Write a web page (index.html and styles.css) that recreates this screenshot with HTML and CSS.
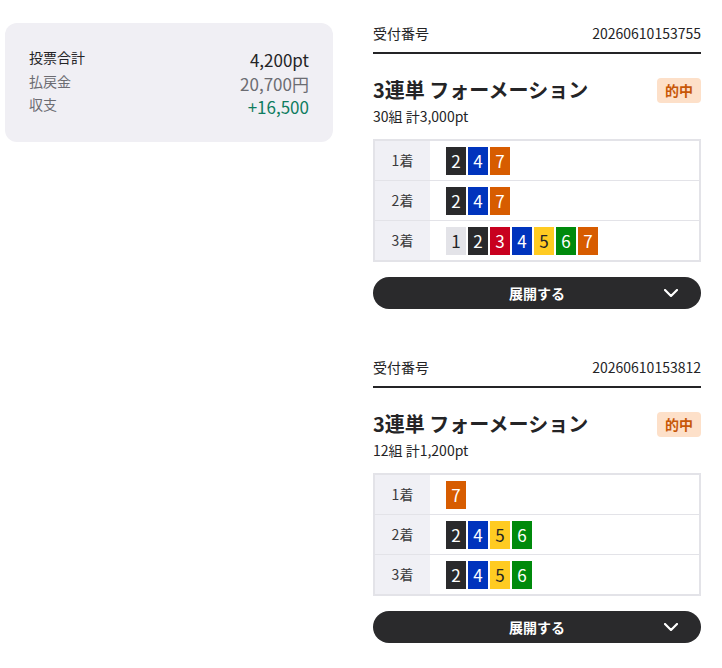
FILE: index.html
```html
<!DOCTYPE html>
<html lang="ja">
<head>
<meta charset="utf-8">
<title>投票履歴</title>
<link rel="stylesheet" href="styles.css">
</head>
<body>
<div class="page">
  <aside class="summary">
    <div class="summary-row">
      <span class="summary-label strong">投票合計</span>
      <span class="summary-value strong">4,200pt</span>
    </div>
    <div class="summary-row">
      <span class="summary-label">払戻金</span>
      <span class="summary-value">20,700円</span>
    </div>
    <div class="summary-row">
      <span class="summary-label">収支</span>
      <span class="summary-value plus">+16,500</span>
    </div>
  </aside>

  <main class="tickets">
    <section class="ticket">
      <div class="ticket-head">
        <span>受付番号</span>
        <span>20260610153755</span>
      </div>
      <div class="ticket-title">
        <h2>3連単 フォーメーション</h2>
        <span class="badge">的中</span>
      </div>
      <p class="ticket-sub">30組 計3,000pt</p>
      <div class="picks">
        <div class="pick-row">
          <div class="pick-label">1着</div>
          <div class="pick-nums">
            <span class="num n2">2</span><span class="num n4">4</span><span class="num n7">7</span>
          </div>
        </div>
        <div class="pick-row">
          <div class="pick-label">2着</div>
          <div class="pick-nums">
            <span class="num n2">2</span><span class="num n4">4</span><span class="num n7">7</span>
          </div>
        </div>
        <div class="pick-row">
          <div class="pick-label">3着</div>
          <div class="pick-nums">
            <span class="num n1">1</span><span class="num n2">2</span><span class="num n3">3</span><span class="num n4">4</span><span class="num n5">5</span><span class="num n6">6</span><span class="num n7">7</span>
          </div>
        </div>
      </div>
      <button class="expand" type="button">
        <span>展開する</span>
        <svg class="chev" width="14" height="8" viewBox="0 0 14 8"><polyline points="1,1 7,7 13,1" fill="none" stroke="#fff" stroke-width="2.2" stroke-linecap="round" stroke-linejoin="round"/></svg>
      </button>
    </section>

    <section class="ticket">
      <div class="ticket-head">
        <span>受付番号</span>
        <span>20260610153812</span>
      </div>
      <div class="ticket-title">
        <h2>3連単 フォーメーション</h2>
        <span class="badge">的中</span>
      </div>
      <p class="ticket-sub">12組 計1,200pt</p>
      <div class="picks">
        <div class="pick-row">
          <div class="pick-label">1着</div>
          <div class="pick-nums">
            <span class="num n7">7</span>
          </div>
        </div>
        <div class="pick-row">
          <div class="pick-label">2着</div>
          <div class="pick-nums">
            <span class="num n2">2</span><span class="num n4">4</span><span class="num n5">5</span><span class="num n6">6</span>
          </div>
        </div>
        <div class="pick-row">
          <div class="pick-label">3着</div>
          <div class="pick-nums">
            <span class="num n2">2</span><span class="num n4">4</span><span class="num n5">5</span><span class="num n6">6</span>
          </div>
        </div>
      </div>
      <button class="expand" type="button">
        <span>展開する</span>
        <svg class="chev" width="14" height="8" viewBox="0 0 14 8"><polyline points="1,1 7,7 13,1" fill="none" stroke="#fff" stroke-width="2.2" stroke-linecap="round" stroke-linejoin="round"/></svg>
      </button>
    </section>
  </main>
</div>
</body>
</html>
```

FILE: styles.css
```css
* { box-sizing: border-box; }

html, body {
  margin: 0;
  padding: 0;
  background: #fff;
}

body {
  font-family: "Noto Sans CJK JP", "Noto Sans", sans-serif;
  color: #242426;
  font-size: 14px;
  line-height: 1.5;
}

.page {
  display: grid;
  grid-template-columns: 328px 328px;
  column-gap: 40px;
  align-items: start;
  padding: 23px 21px 0 5px;
}

/* summary card */
.summary {
  background: #f0eff4;
  border-radius: 12px;
  padding: 25px 24px 23px;
}

.summary-row {
  display: flex;
  justify-content: space-between;
  align-items: center;
}

.summary-label {
  font-size: 14px;
  line-height: 21px;
  color: #6c6c72;
  margin-top: -4px;
}

.summary-value {
  font-size: 17px;
  line-height: 23.5px;
  color: #6c6c72;
}

.summary-label.strong,
.summary-value.strong { color: #242426; }

.summary-value.plus { color: #0e7c60; }

/* tickets */
.tickets {
  display: flex;
  flex-direction: column;
  gap: 48px;
}

.ticket-head {
  display: flex;
  justify-content: space-between;
  font-size: 14px;
  line-height: 21px;
  padding-bottom: 8px;
  border-bottom: 2px solid #242426;
}

.ticket-title {
  display: flex;
  justify-content: space-between;
  align-items: center;
  margin-top: 22px;
}

.ticket-title h2 {
  margin: 0;
  font-size: 20px;
  line-height: 28px;
  font-weight: 700;
}

.badge {
  background: #fde0c9;
  color: #c75708;
  font-weight: 700;
  font-size: 14px;
  line-height: 25px;
  padding: 0 8px;
  border-radius: 4px;
}

.ticket-sub {
  margin: 2px 0 0;
  font-size: 14px;
  line-height: 21px;
}

/* pick table */
.picks {
  margin-top: 12px;
  border: 2px solid #e3e3e8;
}

.pick-row {
  display: flex;
  height: 40px;
}

.pick-row + .pick-row { border-top: 1px solid #e3e3e8; }

.pick-row:first-child { height: 39px; }

.pick-label {
  width: 55px;
  background: #f0f0f5;
  display: flex;
  align-items: center;
  justify-content: center;
  font-size: 14px;
  color: #3a3a3c;
}

.pick-nums {
  display: flex;
  align-items: center;
  gap: 2px;
  padding-left: 16px;
}

.num {
  width: 20px;
  height: 28px;
  display: flex;
  align-items: center;
  justify-content: center;
  font-size: 17px;
  line-height: 1;
  color: #fff;
}

.n1 { background: #e3e3e8; color: #242426; }
.n2 { background: #2a2a2c; }
.n3 { background: #c8001f; }
.n4 { background: #0034bd; }
.n5 { background: #ffcb22; color: #242426; }
.n6 { background: #008a0c; }
.n7 { background: #d75c00; }

/* expand button */
.expand {
  position: relative;
  margin-top: 15px;
  width: 100%;
  height: 32px;
  border: 0;
  border-radius: 16px;
  background: #2a2a2c;
  color: #fff;
  font-family: inherit;
  font-size: 14px;
  font-weight: 700;
  display: flex;
  align-items: center;
  justify-content: center;
  padding: 0;
}

.chev {
  position: absolute;
  right: 23px;
  top: 12px;
}
```
